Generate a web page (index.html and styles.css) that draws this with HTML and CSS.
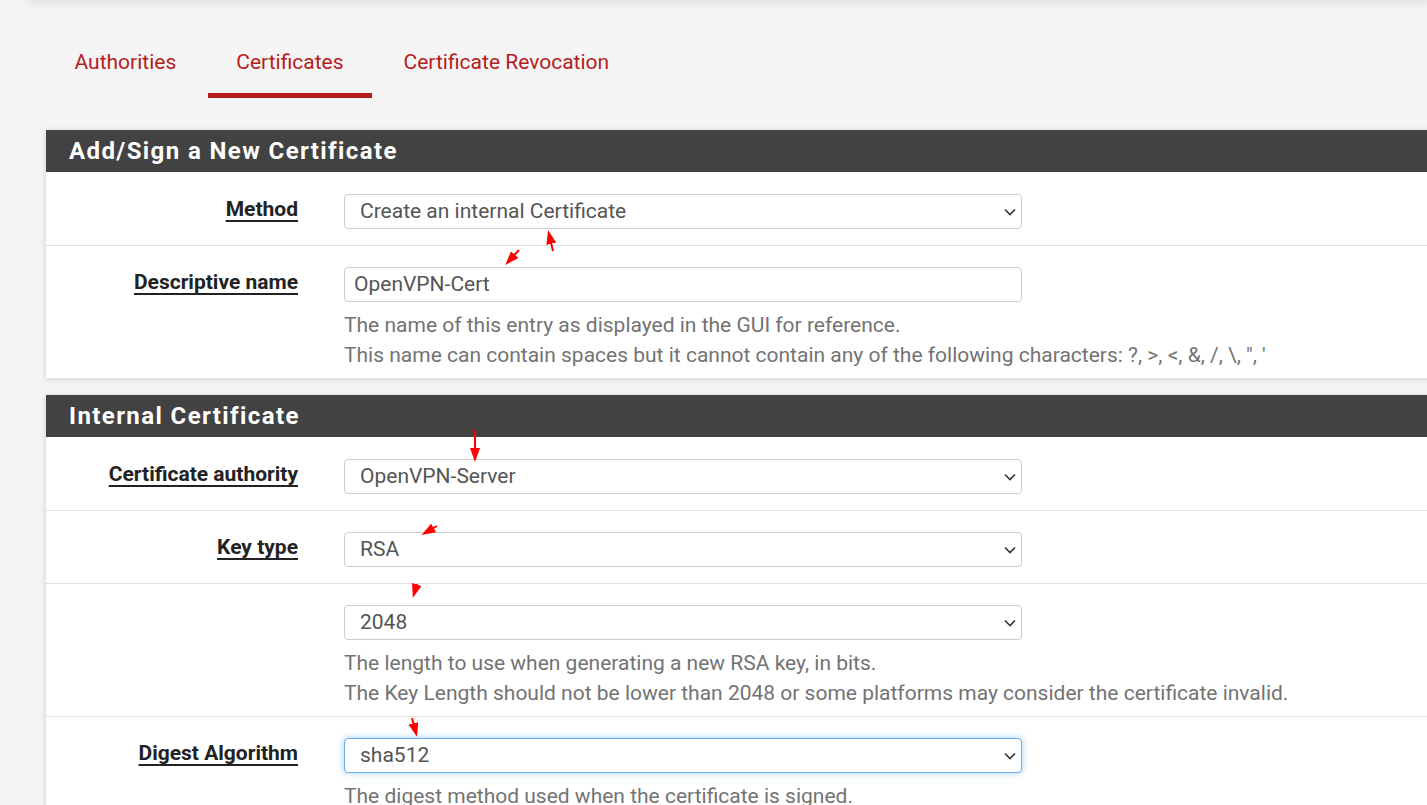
FILE: index.html
```html
<!DOCTYPE html>
<html lang="en">
<head>
<meta charset="utf-8">
<title>Certificates</title>
<link rel="stylesheet" href="styles.css">
</head>
<body>
<div class="topbar"></div>
<nav class="tabs">
  <a class="tab">Authorities</a>
  <a class="tab active">Certificates</a>
  <a class="tab">Certificate Revocation</a>
</nav>

<section class="panel">
  <h2 class="panel-title">Add/Sign a New Certificate</h2>
  <div class="row">
    <span class="label">Method</span>
    <div class="control">
      <div class="select">Create an internal Certificate<svg class="chev" viewBox="0 0 12 8"><path d="M1 1.5 6 6.5 11 1.5"/></svg></div>
    </div>
  </div>
  <div class="row has-help">
    <span class="label">Descriptive name</span>
    <div class="control">
      <div class="input">OpenVPN-Cert</div>
      <p class="help">The name of this entry as displayed in the GUI for reference.<br>This name can contain spaces but it cannot contain any of the following characters: ?, &gt;, &lt;, &amp;, /, \, ", '</p>
    </div>
  </div>
</section>

<section class="panel">
  <h2 class="panel-title">Internal Certificate</h2>
  <div class="row">
    <span class="label">Certificate authority</span>
    <div class="control">
      <div class="select">OpenVPN-Server<svg class="chev" viewBox="0 0 12 8"><path d="M1 1.5 6 6.5 11 1.5"/></svg></div>
    </div>
  </div>
  <div class="row">
    <span class="label">Key type</span>
    <div class="control">
      <div class="select">RSA<svg class="chev" viewBox="0 0 12 8"><path d="M1 1.5 6 6.5 11 1.5"/></svg></div>
    </div>
  </div>
  <div class="row has-help">
    <span class="label"></span>
    <div class="control">
      <div class="select">2048<svg class="chev" viewBox="0 0 12 8"><path d="M1 1.5 6 6.5 11 1.5"/></svg></div>
      <p class="help">The length to use when generating a new RSA key, in bits.<br>The Key Length should not be lower than 2048 or some platforms may consider the certificate invalid.</p>
    </div>
  </div>
  <div class="row has-help">
    <span class="label">Digest Algorithm</span>
    <div class="control">
      <div class="select focus">sha512<svg class="chev" viewBox="0 0 12 8"><path d="M1 1.5 6 6.5 11 1.5"/></svg></div>
      <p class="help">The digest method used when the certificate is signed.</p>
    </div>
  </div>
</section>

<svg class="annot" width="1427" height="805" viewBox="0 0 1427 805">
  <defs>
    <marker id="ah" markerWidth="7" markerHeight="5" refX="5" refY="2.5" orient="auto" markerUnits="strokeWidth">
      <path d="M0 0 L7 2.5 L0 5 Z" fill="#f00"/>
    </marker>
  </defs>
  <g stroke="#f00" stroke-width="2" fill="none" marker-end="url(#ah)">
    <line x1="553" y1="251" x2="549" y2="234"/>
    <line x1="519" y1="250" x2="508" y2="262"/>
    <line x1="475" y1="430" x2="475" y2="458"/>
    <line x1="437" y1="526" x2="425" y2="533"/>
    <line x1="417" y1="584" x2="414" y2="594"/>
    <line x1="412" y1="718" x2="416" y2="733"/>
  </g>
</svg>
</body>
</html>
```
FILE: styles.css
```css
html, body {
  margin: 0;
  padding: 0;
}
body {
  background: #f5f5f5;
  font-family: Roboto, "Liberation Sans", Arial, sans-serif;
  overflow: hidden;
  width: 1427px;
  height: 805px;
  position: relative;
}
.topbar {
  height: 0;
  margin-left: 30px;
  box-shadow: 0 0 9px 3px rgba(0, 0, 0, 0.13);
}
.tabs {
  display: flex;
  gap: 3px;
  padding-left: 46px;
  margin: 26px 0 32px;
}
.tab {
  display: block;
  box-sizing: border-box;
  height: 72px;
  padding: 24px 28.5px 0;
  font-size: 21px;
  line-height: 25px;
  color: #b61c1c;
  border-bottom: 5px solid transparent;
}
.tab.active {
  border-bottom-color: #b61c1c;
}
.panel {
  margin: 0 -40px 17px 46px;
  background: #fff;
  box-shadow: 0 1px 6px rgba(0, 0, 0, 0.16);
}
.panel-title {
  margin: 0;
  height: 42px;
  line-height: 42px;
  padding-left: 23px;
  background: #424242;
  color: #fff;
  font-size: 24px;
  font-weight: 700;
  letter-spacing: 1.4px;
}
.row {
  display: grid;
  grid-template-columns: 252px 678px;
  column-gap: 46px;
  padding: 21px 0 16px;
  border-top: 1px solid #e0e0e0;
}
.panel-title + .row {
  border-top: none;
  padding-top: 22px;
}
.row.has-help {
  padding-bottom: 8px;
}
.label {
  text-align: right;
  font-size: 21px;
  font-weight: 700;
  color: #222;
  line-height: 31px;
  text-decoration: underline;
  text-decoration-thickness: 2px;
  text-underline-offset: 4px;
}
.control {
  min-width: 0;
}
.select, .input {
  position: relative;
  box-sizing: border-box;
  height: 35px;
  border: 1px solid #ccc;
  border-radius: 4px;
  background: #fff;
  font-size: 21px;
  line-height: 33px;
  color: #555;
  padding-left: 15px;
  white-space: nowrap;
}
.input {
  padding-left: 9px;
}
.select.focus {
  border-color: #66afe9;
  box-shadow: 0 0 7px rgba(102, 175, 233, 0.6);
}
.chev {
  position: absolute;
  right: 5px;
  top: 13px;
  width: 12px;
  height: 8px;
  fill: none;
  stroke: #333;
  stroke-width: 1.6;
}
.help {
  margin: 8px 0 0;
  font-size: 21px;
  line-height: 30px;
  color: #737373;
  white-space: nowrap;
}
.annot {
  position: absolute;
  left: 0;
  top: 0;
  pointer-events: none;
}
```
